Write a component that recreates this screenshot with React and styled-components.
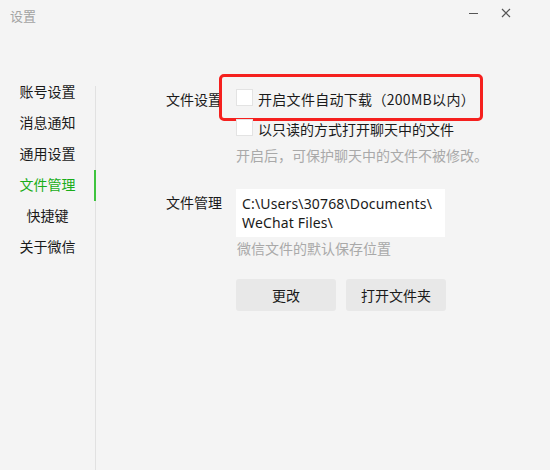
import React from "react";
import styled, { createGlobalStyle } from "styled-components";

const GlobalStyle = createGlobalStyle`
  html, body {
    margin: 0;
    padding: 0;
    background: #f4f4f4;
  }
  body {
    font-family: "Noto Sans CJK SC", sans-serif;
    -webkit-font-smoothing: antialiased;
  }
`;

const menu = ["账号设置", "消息通知", "通用设置", "文件管理", "快捷键", "关于微信"];

function App() {
  return (
    <Window>
      <GlobalStyle />
      <TitleBar>
        <Title>设置</Title>
        <Controls>
          <MinButton />
          <CloseButton>
            <svg width="10" height="10" viewBox="0 0 10 10">
              <path d="M1 1L9 9M9 1L1 9" stroke="#555" strokeWidth="1.2" />
            </svg>
          </CloseButton>
        </Controls>
      </TitleBar>
      <Body>
        <Sidebar>
          {menu.map((item) => (
            <NavItem key={item} active={item === "文件管理"}>
              {item}
            </NavItem>
          ))}
        </Sidebar>
        <Content>
          <Section>
            <Label>文件设置</Label>
            <Fields>
              <Option highlight>
                <Check />
                <OptionText spaced>开启文件自动下载（200MB以内）</OptionText>
              </Option>
              <Option>
                <Check />
                <OptionText>以只读的方式打开聊天中的文件</OptionText>
              </Option>
              <Hint>开启后，可保护聊天中的文件不被修改。</Hint>
            </Fields>
          </Section>
          <Section>
            <Label tall>文件管理</Label>
            <Fields>
              <PathBox>C:\Users\30768\Documents\<br />WeChat Files\</PathBox>
              <Hint indent>微信文件的默认保存位置</Hint>
              <Buttons>
                <Button>更改</Button>
                <Button>打开文件夹</Button>
              </Buttons>
            </Fields>
          </Section>
        </Content>
      </Body>
    </Window>
  );
}

const Window = styled.div`
  width: 550px;
  height: 470px;
  background: #f4f4f4;
  display: flex;
  flex-direction: column;
  overflow: hidden;
  font-family: "Noto Sans CJK SC", sans-serif;
  color: #1a1a1a;
`;

const TitleBar = styled.div`
  height: 30px;
  display: flex;
  align-items: flex-start;
  justify-content: space-between;
  padding: 0 0 0 10px;
`;

const Title = styled.div`
  font-size: 13px;
  line-height: 13px;
  margin-top: 9px;
  color: #a3a3a3;
`;

const Controls = styled.div`
  display: flex;
  align-items: center;
  gap: 23px;
  padding: 8px 39px 0 0;
`;

const MinButton = styled.div`
  width: 9px;
  height: 1px;
  background: #555;
  margin-top: 1px;
`;

const CloseButton = styled.div`
  width: 10px;
  height: 10px;
  display: flex;
`;

const Body = styled.div`
  flex: 1;
  display: flex;
`;

const Sidebar = styled.nav`
  position: relative;
  width: 96px;
  padding-top: 46px;
  display: flex;
  flex-direction: column;
  &::after {
    content: "";
    position: absolute;
    left: 95px;
    top: 56px;
    bottom: 0;
    width: 1px;
    background: #e1e1e1;
  }
`;

const NavItem = styled.div`
  position: relative;
  width: 95px;
  height: 31px;
  line-height: 31px;
  text-align: center;
  font-size: 14px;
  color: ${(p) => (p.active ? "#1aad19" : "#1a1a1a")};
  &::after {
    content: "";
    display: ${(p) => (p.active ? "block" : "none")};
    position: absolute;
    right: -1px;
    top: 1px;
    width: 2px;
    height: 31px;
    background: #3ec43e;
    z-index: 1;
  }
`;

const Content = styled.div`
  flex: 1;
  padding: 54px 0 0 70px;
  display: flex;
  flex-direction: column;
  gap: 23px;
`;

const Section = styled.div`
  display: flex;
`;

const Label = styled.div`
  width: 70px;
  font-size: 14px;
  line-height: ${(p) => (p.tall ? "26px" : "30px")};
  color: #1a1a1a;
`;

const Fields = styled.div`
  display: flex;
  flex-direction: column;
  align-items: flex-start;
`;

const Option = styled.label`
  position: relative;
  display: inline-flex;
  align-items: center;
  gap: 5px;
  height: 30px;
  font-size: 14px;
  color: #1a1a1a;
  &::after {
    content: "";
    display: ${(p) => (p.highlight ? "block" : "none")};
    position: absolute;
    top: -10px;
    bottom: -7px;
    left: -17px;
    right: -8px;
    border: 3px solid #f5201e;
    border-radius: 5px;
  }
`;

const OptionText = styled.span`
  letter-spacing: ${(p) => (p.spaced ? "0.3px" : "0")};
`;

const Check = styled.span`
  width: 15px;
  height: 15px;
  background: #fff;
  border: 1px solid #e3e3e3;
  margin-top: -3px;
`;

const Hint = styled.div`
  font-size: 14px;
  line-height: 22px;
  color: #a9a9a9;
  padding-left: ${(p) => (p.indent ? "1px" : "0")};
`;

const PathBox = styled.div`
  width: 197px;
  padding: 5px 6px;
  background: #fff;
  font-family: "Noto Sans", sans-serif;
  font-size: 14px;
  line-height: 19px;
  color: #1a1a1a;
  letter-spacing: 0.15px;
`;

const Buttons = styled.div`
  display: flex;
  gap: 10px;
  margin-top: 20px;
`;

const Button = styled.button`
  width: 100px;
  height: 32px;
  border: none;
  border-radius: 3px;
  background: #e8e8e8;
  font-family: "Noto Sans CJK SC", sans-serif;
  font-size: 14px;
  color: #1a1a1a;
  padding: 0;
`;

export default App;
